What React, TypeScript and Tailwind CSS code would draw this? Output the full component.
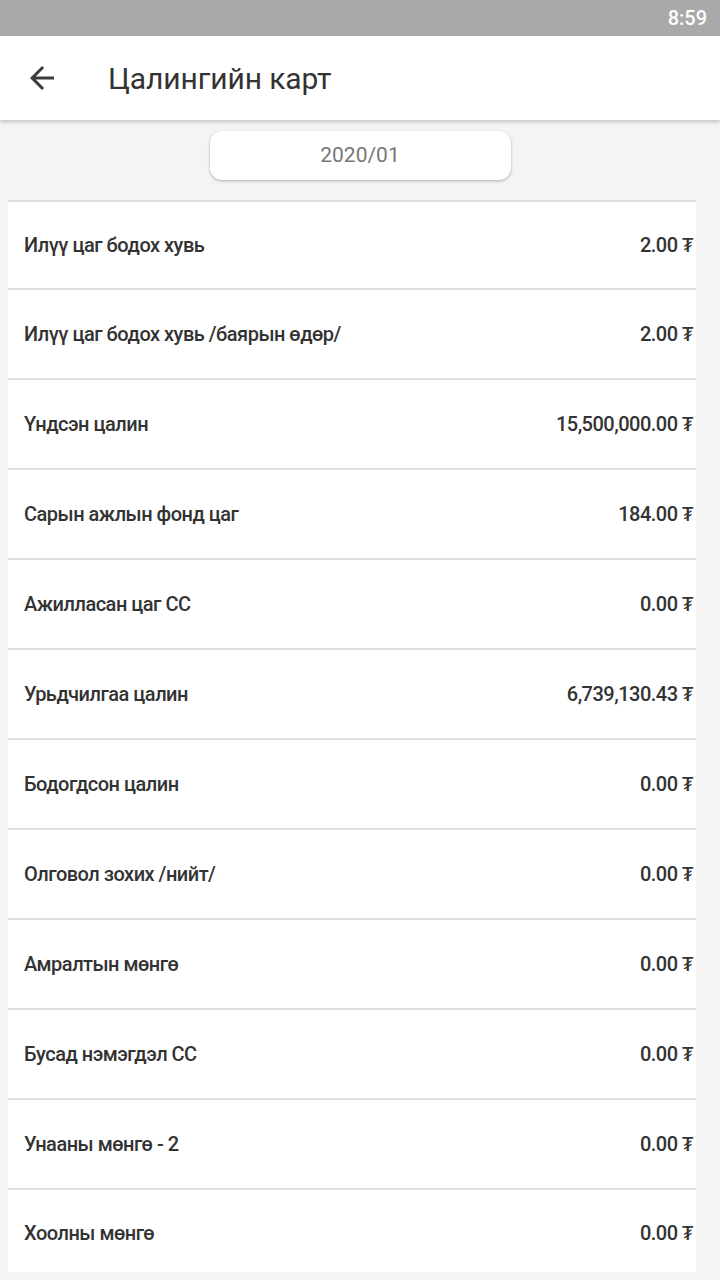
import React from "react";

const rows: [string, string][] = [
  ["Илүү цаг бодох хувь", "2.00"],
  ["Илүү цаг бодох хувь /баярын өдөр/", "2.00"],
  ["Үндсэн цалин", "15,500,000.00"],
  ["Сарын ажлын фонд цаг", "184.00"],
  ["Ажилласан цаг СС", "0.00"],
  ["Урьдчилгаа цалин", "6,739,130.43"],
  ["Бодогдсон цалин", "0.00"],
  ["Олговол зохих /нийт/", "0.00"],
  ["Амралтын мөнгө", "0.00"],
  ["Бусад нэмэгдэл СС", "0.00"],
  ["Унааны мөнгө - 2", "0.00"],
  ["Хоолны мөнгө", "0.00"],
];

export default function App() {
  return (
    <div
      className="w-[720px] h-[1280px] overflow-hidden bg-[#f4f4f4] flex flex-col"
      style={{ fontFamily: "Roboto, 'Noto Sans', sans-serif" }}
    >
      <div className="h-[36px] bg-[#a9a9a9] flex items-center justify-end pr-[13px] shrink-0">
        <span className="text-white text-[20px] font-medium">8:59</span>
      </div>
      <div className="h-[84px] bg-white flex items-center shadow-[0_2px_4px_rgba(0,0,0,0.2)] relative z-10 shrink-0">
        <svg
          width="36"
          height="36"
          viewBox="0 0 24 24"
          className="ml-[24px]"
          fill="#3c3c3c"
        >
          <path d="M20 11H7.83l5.59-5.59L12 4l-8 8 8 8 1.41-1.41L7.83 13H20v-2z" />
        </svg>
        <span className="ml-[48px] text-[30px] text-[#333333] tracking-[-0.1px]">Цалингийн карт</span>
      </div>
      <div className="flex justify-center pt-[11px] pb-[20px] shrink-0">
        <div className="w-[301px] h-[49px] bg-white rounded-[12px] shadow-[0_1px_3px_rgba(0,0,0,0.3)] flex items-center justify-center text-[21px] text-[#777777]">
          2020/01
        </div>
      </div>
      <div className="mx-[8px] w-[688px] bg-white border-t-2 border-[#e0e0e0] flex flex-col">
        {rows.map(([label, value], i) => (
          <div
            key={i}
            className={`flex items-center justify-between pl-[16px] pr-[3px] ${
              i === 0
                ? "h-[88px] border-b-2 border-[#e0e0e0]"
                : i < rows.length - 1
                ? "h-[90px] border-b-2 border-[#e0e0e0]"
                : "h-[82px] pt-[4px]"
            }`}
          >
            <span className="text-[20px] font-medium text-[#333333] tracking-[-0.5px]">{label}</span>
            <span className="text-[20px] font-medium text-[#333333] tracking-[-0.5px]">
              {value} ₮
            </span>
          </div>
        ))}
      </div>
    </div>
  );
}
